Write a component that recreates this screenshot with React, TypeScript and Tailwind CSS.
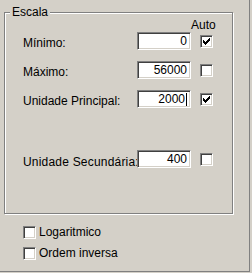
import React from "react";

const font = { fontFamily: '"Liberation Sans", Arial, sans-serif' };

function Check() {
  return (
    <svg width="7" height="7" viewBox="0 0 7 7" shapeRendering="crispEdges" className="absolute left-[2px] top-[2px]">
      <path
        fill="#000"
        d="M6 0h1v1H6z M5 1h2v1H5z M0 2h1v1H0z M4 2h3v1H4z M0 3h2v1H0z M3 3h3v1H3z M0 4h5v1H0z M1 5h3v1H1z M2 6h1v1H2z"
      />
    </svg>
  );
}

function CheckBox({ checked }: { checked?: boolean }) {
  return (
    <div className="relative w-[13px] h-[13px] shrink-0 bg-white border border-t-[#808080] border-l-[#808080] border-b-white border-r-white shadow-[inset_1px_1px_0_#404040,inset_-1px_-1px_0_#d4d0c8]">
      {checked && <Check />}
    </div>
  );
}

function Field({ value, cursor }: { value: string; cursor?: boolean }) {
  return (
    <div className="relative z-10 w-[54px] h-[18px] shrink-0 bg-white border border-t-[#808080] border-l-[#808080] border-b-white border-r-white shadow-[inset_1px_1px_0_#404040,inset_-1px_-1px_0_#d4d0c8] flex items-center justify-end pr-[3px] text-[12px] leading-[14px] text-black">
      <span>{value}</span>
      {cursor && <span className="inline-block w-[1px] h-[13px] bg-black ml-[1px]" />}
    </div>
  );
}

function Row({ label, value, checked, cursor, labelClass }: { label: string; value: string; checked?: boolean; cursor?: boolean; labelClass?: string }) {
  return (
    <div className="flex items-center h-[18px] pl-[18px]">
      <div className={`w-[114px] shrink-0 whitespace-nowrap text-[12px] leading-[14px] text-black ${labelClass ?? "mt-[3px]"}`}>{label}</div>
      <Field value={value} cursor={cursor} />
      <div className="ml-[9px]">
        <CheckBox checked={checked} />
      </div>
    </div>
  );
}

export default function App() {
  return (
    <div className="w-[252px] h-[273px] bg-[#d4d0c8] overflow-hidden" style={font}>
      <div className="w-[250px] h-[272px] border-r border-b border-[#808080] pt-[12px] pl-[4px]">
        <div className="relative w-[229px] h-[202px] border border-[#808080] shadow-[inset_1px_1px_0_#fff,1px_1px_0_#fff]">
          <div className="absolute left-[5px] top-[-7px] px-[2px] bg-[#d4d0c8] text-[12px] leading-[13px] text-black">
            Escala
          </div>
          <div className="pt-[6px]">
            <div className="pl-[186px] text-[12px] leading-[13px] text-black">Auto</div>
            <Row label="Mínimo:" value="0" checked />
            <div className="mt-[11px]">
              <Row label="Máximo:" value="56000" />
            </div>
            <div className="mt-[11px]">
              <Row label="Unidade Principal:" value="2000" checked cursor />
            </div>
            <div className="mt-[42px]">
              <Row label="Unidade Secundária:" value="400" labelClass="mt-[5px] tracking-[0.2px]" />
            </div>
          </div>
        </div>
        <div className="mt-[12px] pl-[19px] flex items-center h-[13px]">
          <CheckBox />
          <span className="ml-[3px] text-[12px] leading-[13px] text-black -mt-[1px]">Logaritmico</span>
        </div>
        <div className="mt-[8px] pl-[19px] flex items-center h-[13px]">
          <CheckBox />
          <span className="ml-[3px] text-[12px] leading-[13px] text-black -mt-[1px]">Ordem inversa</span>
        </div>
      </div>
    </div>
  );
}
